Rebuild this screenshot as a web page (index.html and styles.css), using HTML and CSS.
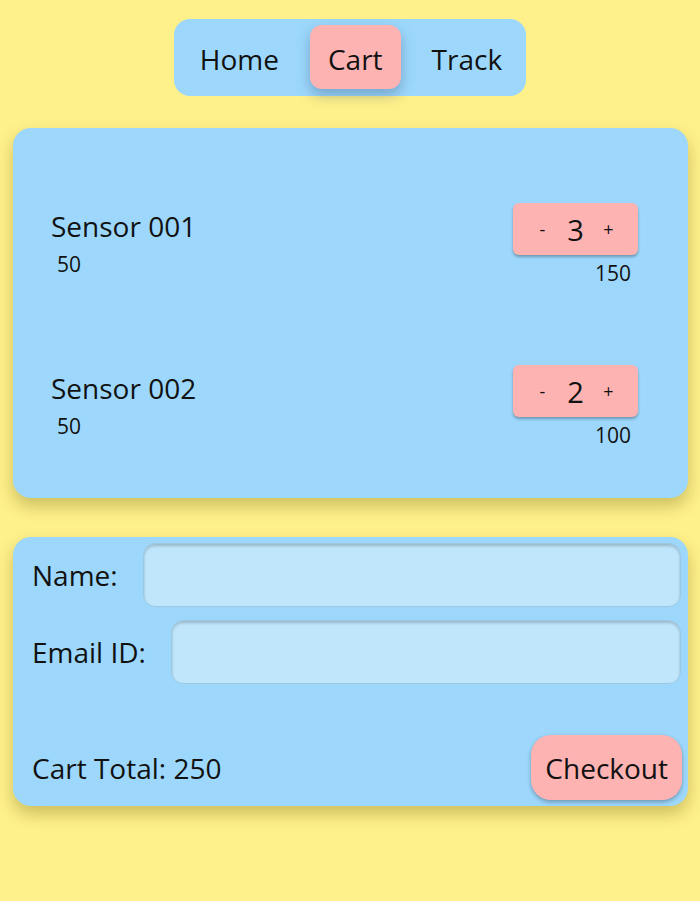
FILE: index.html
```html
<!DOCTYPE html>
<html>
<head>
<meta charset="utf-8">
<link rel="stylesheet" href="styles.css">
</head>
<body>
<nav class="nav">
  <a class="nav-btn">Home</a>
  <a class="nav-btn active">Cart</a>
  <a class="nav-btn">Track</a>
</nav>
<section class="card items">
  <div class="item">
    <div class="item-info">
      <div class="item-name">Sensor 001</div>
      <div class="item-price">50</div>
    </div>
    <div class="item-side">
      <div class="qty"><span class="qbtn">-</span><span class="qnum">3</span><span class="qbtn">+</span></div>
      <div class="item-total">150</div>
    </div>
  </div>
  <div class="item">
    <div class="item-info">
      <div class="item-name">Sensor 002</div>
      <div class="item-price">50</div>
    </div>
    <div class="item-side">
      <div class="qty"><span class="qbtn">-</span><span class="qnum">2</span><span class="qbtn">+</span></div>
      <div class="item-total">100</div>
    </div>
  </div>
</section>
<section class="card form">
  <label class="field"><span class="label">Name:</span><input class="input" type="text"></label>
  <label class="field"><span class="label">Email ID:</span><input class="input" type="text"></label>
  <div class="footer">
    <span class="total">Cart Total: 250</span>
    <button class="checkout">Checkout</button>
  </div>
</section>
</body>
</html>
```
FILE: styles.css
```css
* { box-sizing: border-box; }
html, body { margin: 0; padding: 0; }
body {
  background: #fef08a;
  font-family: "Open Sans", "Noto Sans", sans-serif;
  color: #111;
  height: 901px;
  overflow: hidden;
  padding-top: 19px;
}
.nav {
  display: flex;
  width: max-content;
  margin: 0 auto;
  background: #9dd8fc;
  border-radius: 16px;
  padding: 6px 6px 7px 8px;
  gap: 13px;
}
.nav-btn {
  display: flex;
  align-items: center;
  height: 64px;
  padding: 4px 18px 0;
  font-size: 28px;
  border-radius: 12px;
}
.active {
  background: #feb3b3;
  box-shadow: 0 6px 14px rgba(40, 70, 110, 0.35);
}
.card {
  margin: 32px 12px 0 13px;
  background: #9dd8fc;
  border-radius: 18px;
  box-shadow: 0 8px 16px rgba(90, 80, 0, 0.3);
}
.items {
  padding: 72px 50px 53px 38px;
  display: flex;
  flex-direction: column;
  gap: 75px;
  height: 370px;
}
.item {
  display: flex;
  justify-content: space-between;
  align-items: flex-start;
}
.item-name {
  font-size: 28px;
  line-height: 52px;
}
.item-price {
  font-size: 21px;
  margin-left: 6px;
  line-height: 24px;
}
.item-side {
  display: flex;
  flex-direction: column;
  align-items: flex-end;
  padding-top: 3px;
}
.qty {
  display: flex;
  align-items: center;
  justify-content: center;
  width: 125px;
  height: 52px;
  background: #feb3b3;
  border-radius: 6px;
  box-shadow: 0 2px 3px rgba(0, 0, 0, 0.3);
}
.qbtn {
  font-size: 18px;
  width: 36px;
  text-align: center;
}
.qnum {
  font-size: 29px;
  width: 30px;
  text-align: center;
}
.item-total {
  font-size: 21px;
  margin-right: 7px;
  margin-top: 4px;
}
.form {
  padding: 6px 7px 6px 19px;
  display: flex;
  flex-direction: column;
  height: 269px;
  margin-top: 39px;
}
.field {
  display: flex;
  align-items: center;
  gap: 25px;
  margin-bottom: 13px;
}
.label {
  font-size: 28px;
}
.input {
  flex: 1;
  height: 64px;
  background: #bfe6fb;
  border: 1px solid #9cc8e4;
  border-radius: 12px;
  box-shadow: inset 0 2px 3px rgba(0, 0, 0, 0.2);
  font: inherit;
  outline: none;
}
.footer {
  margin-top: auto;
  display: flex;
  justify-content: space-between;
  align-items: center;
}
.total {
  font-size: 28px;
}
.checkout {
  height: 65px;
  padding: 0 14px;
  border: none;
  background: #feb3b3;
  border-radius: 20px;
  font-family: inherit;
  font-size: 28px;
  color: #111;
  box-shadow: 0 2px 4px rgba(0, 0, 0, 0.3);
  margin-right: -1px;
}
```
